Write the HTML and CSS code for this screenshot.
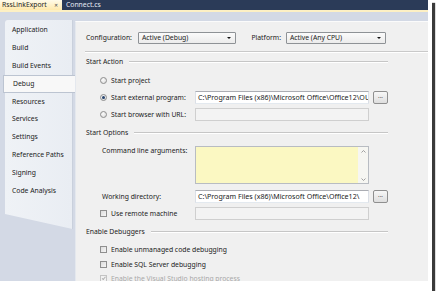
FILE: index.html
```html
<!DOCTYPE html>
<html lang="en">
<head>
  <meta charset="UTF-8">
  <title>RssLinkExport - Debug</title>
  <link rel="stylesheet" href="styles.css">
</head>
<body>
  <div class="frame">
    <div class="shot">
      <div class="tabbar">
        <div class="doc-tab active">RssLinkExport<span class="close">&#x2715;</span></div>
        <div class="doc-tab">Connect.cs</div>
      </div>
      <div class="tabline"></div>
      <div class="workspace">
        <div class="sidebar">
          <div class="nav">
            <div class="nav-item">Application</div>
            <div class="nav-item">Build</div>
            <div class="nav-item">Build Events</div>
            <div class="nav-item selected">Debug</div>
            <div class="nav-item">Resources</div>
            <div class="nav-item">Services</div>
            <div class="nav-item">Settings</div>
            <div class="nav-item">Reference Paths</div>
            <div class="nav-item">Signing</div>
            <div class="nav-item">Code Analysis</div>
          </div>
        </div>

        <div class="page">
          <div class="config-row">
            <span class="config-label">Configuration:</span>
            <div class="combo">Active (Debug)</div>
            <span class="platform-label">Platform:</span>
            <div class="combo">Active (Any CPU)</div>
          </div>
          <div class="header-sep"></div>

          <div class="group-title">Start Action</div>
          <div class="rows rows-action">
            <div class="field-row">
              <label class="choice"><span class="radio"></span>Start project</label>
            </div>
            <div class="field-row">
              <label class="choice"><span class="radio checked"></span>Start external program:</label>
              <div class="textbox">C:\Program Files (x86)\Microsoft Office\Office12\OU</div>
              <div class="browse">...</div>
            </div>
            <div class="field-row">
              <label class="choice"><span class="radio"></span>Start browser with URL:</label>
              <div class="textbox disabled"></div>
            </div>
          </div>

          <div class="group-title options-title">Start Options</div>
          <div class="field-row args-row">
            <span class="plain-label">Command line arguments:</span>
            <div class="args">
              <div class="args-scroll">
                <svg width="5" height="3" viewBox="0 0 5 3"><path d="M0.5 2.5 L2.5 0.5 L4.5 2.5" fill="none" stroke="#8a8a8a" stroke-width="0.8"/></svg>
                <svg width="5" height="3" viewBox="0 0 5 3"><path d="M0.5 0.5 L2.5 2.5 L4.5 0.5" fill="none" stroke="#8a8a8a" stroke-width="0.8"/></svg>
              </div>
            </div>
          </div>
          <div class="rows rows-options">
            <div class="field-row">
              <span class="plain-label">Working directory:</span>
              <div class="textbox">C:\Program Files (x86)\Microsoft Office\Office12\</div>
              <div class="browse">...</div>
            </div>
            <div class="field-row">
              <label class="choice"><span class="check"></span>Use remote machine</label>
              <div class="textbox disabled"></div>
            </div>
          </div>

          <div class="group-title debug-title">Enable Debuggers</div>
          <div class="rows rows-debug">
            <div class="check-row"><label class="choice"><span class="check"></span>Enable unmanaged code debugging</label></div>
            <div class="check-row"><label class="choice"><span class="check"></span>Enable SQL Server debugging</label></div>
            <div class="check-row muted"><label class="choice"><span class="check ticked"></span>Enable the Visual Studio hosting process</label></div>
          </div>
        </div>
      </div>
    </div>
  </div>
</body>
</html>
```

FILE: styles.css
```css
*, *::before, *::after {
  box-sizing: border-box;
  margin: 0;
  padding: 0;
}

body {
  background: #fff;
  font-family: "Noto Sans", "Open Sans", sans-serif;
  font-size: 6.8px;
  color: #1a1a1a;
}

.frame {
  width: 432px;
  height: 291px;
  background: #fff;
  box-shadow: 3px 3px 1px #3a3a3a;
}

.shot {
  width: 428px;
  height: 281px;
  display: flex;
  flex-direction: column;
  overflow: hidden;
}

/* document tabs */
.tabbar {
  height: 10px;
  flex: none;
  display: flex;
  background: #2b3b58;
}

.doc-tab {
  line-height: 10px;
  color: #e9edf5;
  padding-left: 4px;
}

.doc-tab.active {
  width: 62px;
  display: flex;
  padding-left: 2px;
  color: #1e1e1e;
  background: linear-gradient(#fffbea, #ffe9ab);
}

.close {
  margin-left: auto;
  padding-right: 4px;
  font-size: 5px;
  color: #444;
}

.tabline {
  height: 2px;
  flex: none;
  background: #fdf0c4;
}

.workspace {
  flex: 1;
  display: flex;
  background: #d3d9e5;
}

/* property page tabs */
.sidebar {
  width: 75px;
  flex: none;
  padding-top: 8px;
}

.nav {
  margin-left: 5px;
  width: 68px;
  padding: 1px 0 30px;
  border-radius: 3px 0 0 0;
  background: linear-gradient(90deg, #eff2f6, #e9edf3);
  border-right: 1px solid #c9d0dc;
  clip-path: polygon(-4px 0, calc(100% + 4px) 0, calc(100% + 4px) 100%, 0 calc(100% - 16px), -4px calc(100% - 16px));
}

.nav-item {
  height: 17.9px;
  line-height: 17.9px;
  padding-left: 7px;
  white-space: nowrap;
}

.nav-item.selected {
  margin-left: -2px;
  margin-right: -3px;
  padding-left: 9px;
  background: #f8f8f8;
  border: 1px solid #bcc4d1;
  border-right: none;
  line-height: 15.9px;
}

/* page body */
.page {
  flex: 1;
  margin-top: 9px;
  padding-left: 10px;
  background: #f0f0f0;
  border-top: 1px solid #fbfbfb;
  border-left: 1px solid #e4e8ee;
}

.config-row {
  height: 12px;
  margin-top: 9.5px;
  display: grid;
  grid-template-columns: 52px 98px 50px 100px;
  align-items: center;
}

.platform-label {
  justify-self: end;
  margin-right: 5px;
  white-space: nowrap;
}

.combo {
  position: relative;
  height: 12px;
  line-height: 10px;
  padding-left: 3px;
  border: 1px solid #8e9296;
  border-radius: 1px;
  background: linear-gradient(#fbfbfb, #ececec);
  white-space: nowrap;
}

.combo::after {
  content: "";
  position: absolute;
  right: 4px;
  top: 4px;
  border-left: 2px solid transparent;
  border-right: 2px solid transparent;
  border-top: 2.5px solid #111;
}

.header-sep {
  height: 2px;
  margin: 7px 0 0 -1px;
  border-top: 1px solid #c9c9c9;
  border-bottom: 1px solid #fff;
}

.group-title {
  width: 302px;
  height: 10px;
  margin-top: 4px;
  display: flex;
  align-items: center;
}

.group-title::after {
  content: "";
  flex: 1;
  height: 2px;
  margin-left: 6px;
  border-top: 1px solid #c6c6c6;
  border-bottom: 1px solid #fff;
}

.options-title { margin-top: 4.5px; }
.debug-title { margin-top: 5px; }

.rows-action { margin-top: 5.5px; }
.rows-options { margin-top: 4px; }
.rows-debug { margin-top: 6px; }

.field-row {
  height: 17px;
  display: grid;
  grid-template-columns: 109px 174px 19px;
  align-items: center;
}

.check-row {
  height: 14.4px;
  display: flex;
  align-items: center;
}

.choice {
  display: flex;
  align-items: center;
  padding-left: 14px;
  white-space: nowrap;
}

.plain-label {
  padding-left: 16px;
  white-space: nowrap;
}

.radio {
  width: 7px;
  height: 7px;
  margin-right: 4px;
  border: 1px solid #8d8d8d;
  border-radius: 50%;
  background: radial-gradient(circle at 40% 35%, #fbfbfb, #d8d8d8);
  display: grid;
  place-items: center;
}

.radio.checked::after {
  content: "";
  width: 3px;
  height: 3px;
  border-radius: 50%;
  background: #26436e;
}

.check {
  width: 7px;
  height: 7px;
  margin-right: 4px;
  border: 1px solid #8f8f8f;
  background: linear-gradient(135deg, #dcdcdc, #f6f6f6);
}

.check.ticked {
  position: relative;
  border-color: #c4c4c4;
  background: #f2f2f2;
}

.check.ticked::after {
  content: "";
  position: absolute;
  left: 1.5px;
  top: 0;
  width: 2px;
  height: 3.5px;
  border-right: 1px solid #b0b0b0;
  border-bottom: 1px solid #b0b0b0;
  transform: rotate(40deg);
}

.muted { color: #a8a8a8; }

.textbox {
  height: 13px;
  line-height: 11px;
  padding-left: 2px;
  font-size: 7.1px;
  border: 1px solid #abadb3;
  border-left-color: #dbdfe6;
  border-right-color: #dbdfe6;
  border-bottom-color: #e3e9ef;
  background: #fff;
  white-space: nowrap;
  overflow: hidden;
}

.textbox.disabled {
  background: #f3f3f3;
  border-color: #cfcfcf;
}

.browse {
  justify-self: end;
  width: 15px;
  height: 13px;
  line-height: 9px;
  text-align: center;
  border: 1px solid #8f8f8f;
  border-radius: 2px;
  background: linear-gradient(#f7f7f7, #dedede);
  font-size: 6px;
}

.args-row {
  height: 38px;
  margin-top: 8px;
  align-items: start;
}

.args {
  height: 38px;
  display: flex;
  justify-content: flex-end;
  border: 1px solid #b8bcc2;
  background: #fbf8c2;
}

.args-scroll {
  width: 10px;
  display: flex;
  flex-direction: column;
  justify-content: space-between;
  align-items: center;
  padding: 3px 0 2px;
  background: #f6f6f2;
}
```
